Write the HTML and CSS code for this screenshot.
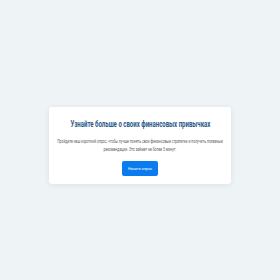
FILE: index.html
```html
<!DOCTYPE html>
<html lang="ru">
<head>
<meta charset="utf-8">
<link rel="stylesheet" href="styles.css">
</head>
<body>
<main class="page">
  <section class="card">
    <h1 class="title"><span class="squeeze">Узнайте больше о своих финансовых привычках</span></h1>
    <p class="text"><span class="squeeze">Пройдите наш короткий опрос, чтобы лучше понять свои финансовые стратегии и получить полезные</span><br><span class="squeeze">рекомендации. Это займет не более 5 минут.</span></p>
    <button class="btn"><span class="squeeze">Начать опрос</span></button>
  </section>
</main>
</body>
</html>
```
FILE: styles.css
```css
* { box-sizing: border-box; }
html, body { margin: 0; padding: 0; }
body {
  background: #eef3f5;
  font-family: Roboto, "Liberation Sans", sans-serif;
}
.page {
  height: 280px;
  display: flex;
  align-items: flex-start;
  justify-content: center;
  padding-top: 107px;
}
.card {
  width: 182px;
  height: 77px;
  background: #ffffff;
  border-radius: 3px;
  box-shadow: 0 1px 6px rgba(0, 0, 0, 0.08);
  display: flex;
  flex-direction: column;
  align-items: center;
  padding-top: 12px;
}
.squeeze {
  display: inline-block;
  white-space: nowrap;
  transform-origin: center;
}
.title {
  margin: 0;
  font-size: 8.5px;
  line-height: 10px;
  font-weight: 700;
  color: #2a5a8a;
  text-align: center;
}
.title .squeeze { transform: scaleX(0.71); }
.text {
  margin: 9px 0 0;
  font-size: 4.5px;
  line-height: 8px;
  color: #5f5f5f;
  text-align: center;
}
.text .squeeze { transform: scaleX(0.76); }
.btn {
  margin-top: 7px;
  width: 36px;
  height: 15px;
  border: 0;
  border-radius: 2px;
  background: #0a7cf0;
  color: #fff;
  font-family: inherit;
  font-size: 4.4px;
  padding: 0;
}
.btn .squeeze { transform: scaleX(0.85); }
```
